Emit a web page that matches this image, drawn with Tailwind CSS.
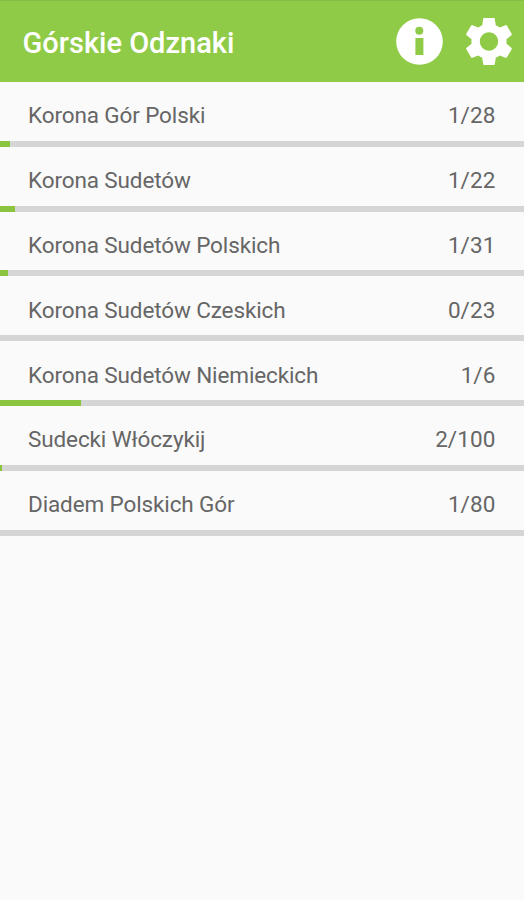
<!DOCTYPE html>
<html lang="pl">
<head>
<meta charset="utf-8">
<title>Górskie Odznaki</title>
<script src="https://cdn.jsdelivr.net/npm/@tailwindcss/browser@4"></script>
</head>
<body class="h-[900px] overflow-hidden bg-[#fafafa] font-['Roboto',sans-serif] text-[#666666]">
<header class="flex h-[82px] items-center justify-between border-t border-[#86bb48] bg-[#8fcb47] pl-[22.5px] pr-[12px] text-white">
  <h1 class="pt-[3px] text-[29px] leading-8 font-medium whitespace-nowrap">Górskie Odznaki</h1>
  <div class="flex items-center gap-[23px]">
    <svg class="size-[47px]" viewBox="0 0 47 47"><circle cx="23.5" cy="23.5" r="23.3" fill="#fff"/><circle cx="23.3" cy="12.7" r="4" fill="#8fcb47"/><path d="M19.4 20h8v17h-8z" fill="#8fcb47"/></svg>
    <svg class="h-[47px] w-[46px]" viewBox="2.2 2 19.6 20" preserveAspectRatio="none"><path fill="#fff" d="M19.43 12.98c.04-.32.07-.64.07-.98s-.03-.66-.07-.98l2.11-1.65c.19-.15.24-.42.12-.64l-2-3.46c-.12-.22-.39-.3-.61-.22l-2.49 1c-.52-.4-1.08-.73-1.69-.98l-.38-2.65C14.46 2.18 14.25 2 14 2h-4c-.25 0-.46.18-.49.42l-.38 2.65c-.61.25-1.17.59-1.69.98l-2.49-1c-.23-.09-.49 0-.61.22l-2 3.46c-.13.22-.07.49.12.64l2.11 1.65c-.04.32-.07.65-.07.98s.03.66.07.98l-2.11 1.65c-.19.15-.24.42-.12.64l2 3.46c.12.22.39.3.61.22l2.49-1c.52.4 1.08.73 1.69.98l.38 2.65c.03.24.24.42.49.42h4c.25 0 .46-.18.49-.42l.38-2.65c.61-.25 1.17-.59 1.69-.98l2.49 1c.23.09.49 0 .61-.22l2-3.46c.12-.22.07-.49-.12-.64l-2.11-1.65zM12 15.9c-2.15 0-3.9-1.75-3.9-3.9s1.75-3.9 3.9-3.9 3.9 1.75 3.9 3.9-1.75 3.9-3.9 3.9z"/></svg>
  </div>
</header>
<main id="list"></main>
<script>
const badges = [
  ["Korona Gór Polski", "1/28", 10],
  ["Korona Sudetów", "1/22", 15],
  ["Korona Sudetów Polskich", "1/31", 8],
  ["Korona Sudetów Czeskich", "0/23", 0],
  ["Korona Sudetów Niemieckich", "1/6", 81],
  ["Sudecki Włóczykij", "2/100", 2],
  ["Diadem Polskich Gór", "1/80", 0]
];
document.getElementById("list").innerHTML = badges.map(([name, count, done]) => `
  <section class="flex h-[64.8px] flex-col">
    <div class="flex flex-1 items-center justify-between pt-[8px] pr-[28.5px] pl-[28px] text-[22.5px] leading-7 whitespace-nowrap">
      <span class="tracking-[-0.12px]">${name}</span><span class="tracking-[0.1px]">${count}</span>
    </div>
    <div class="h-[6px] bg-[#d5d5d5]"><div class="h-full bg-[#8bc53f]" style="width:${done}px"></div></div>
  </section>`).join("");
</script>
</body>
</html>
